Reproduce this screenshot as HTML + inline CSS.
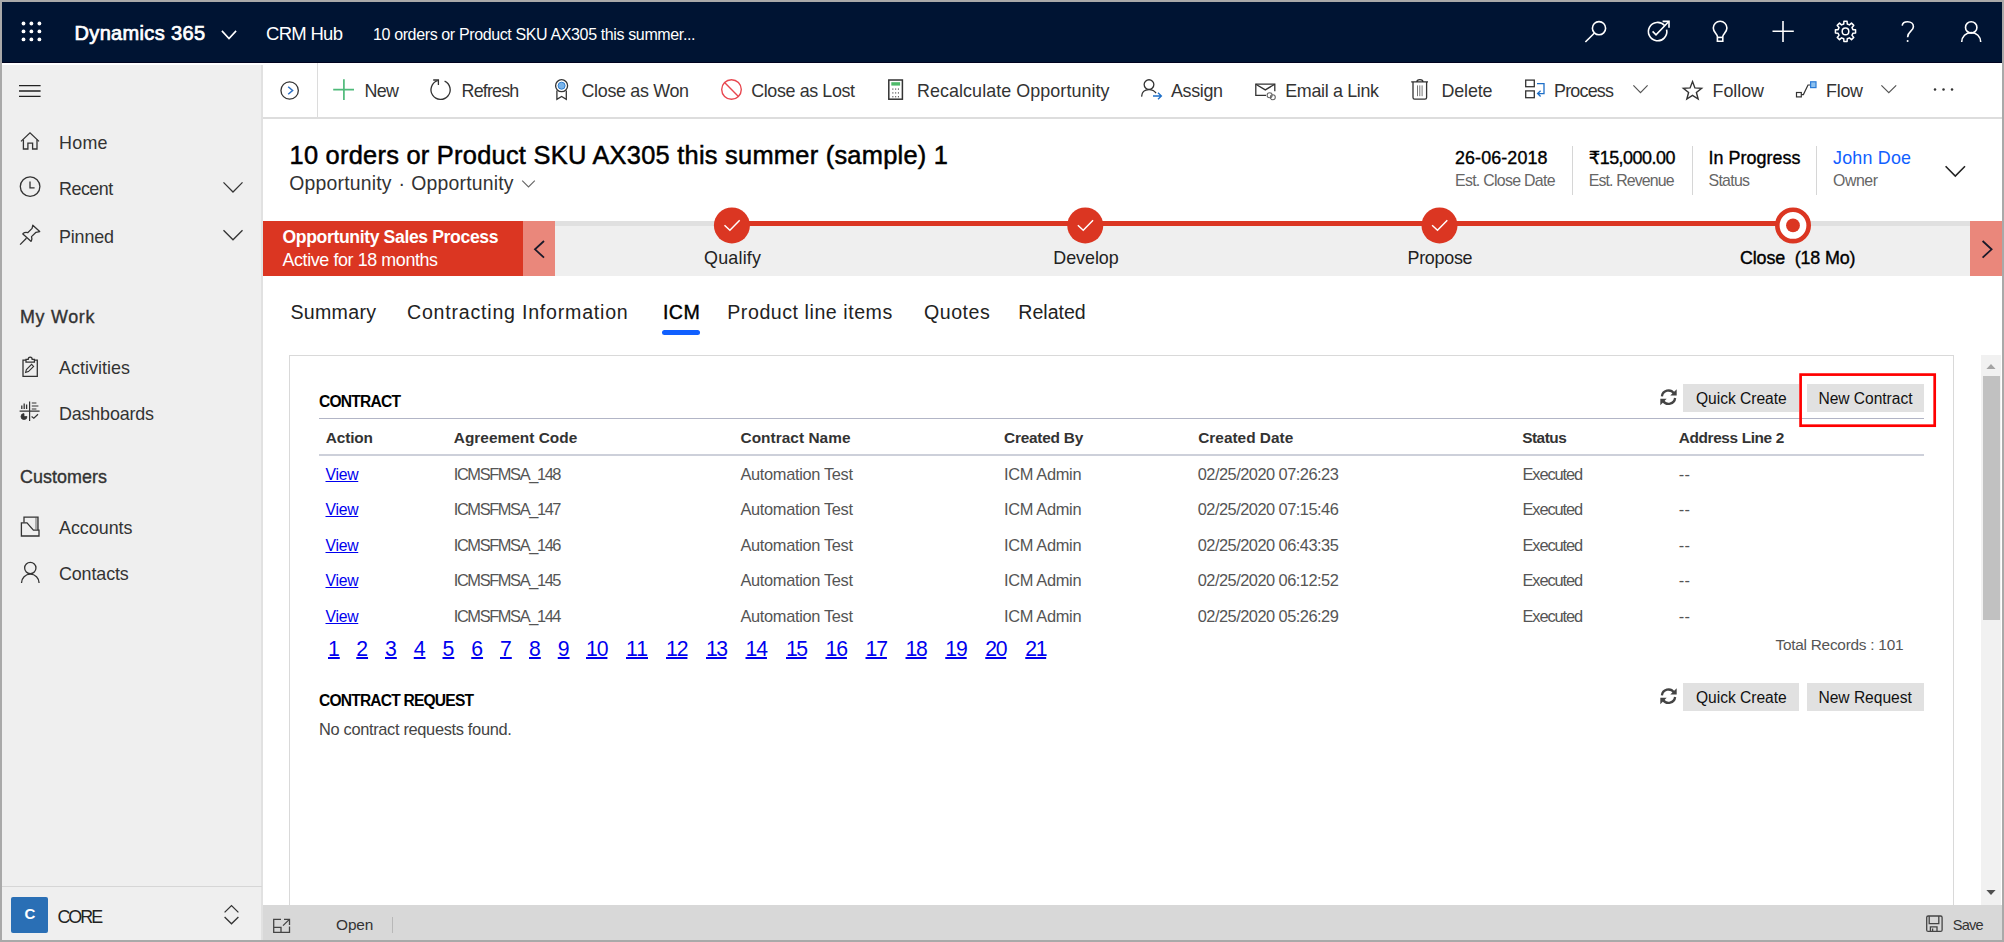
<!DOCTYPE html>
<html lang="en">
<head>
<meta charset="utf-8">
<title>Opportunity: 10 orders or Product SKU AX305 this summer (sample) 1 - Dynamics 365</title>
<style>
html,body{margin:0;padding:0;}
body{width:2004px;height:942px;overflow:hidden;background:#a9a9a9;font-family:"Liberation Sans","DejaVu Sans",sans-serif;position:relative;}
#app{position:absolute;left:2px;top:2px;width:2000px;height:938px;background:#fff;overflow:hidden;}
.box{position:absolute;overflow:visible;}
.g{position:absolute;left:0;top:0;width:0;height:0;}
.t{position:absolute;white-space:pre;line-height:1;margin:0;padding:0;text-decoration:none;}
a.t{text-decoration:underline;text-decoration-thickness:1.3px;text-underline-offset:2px;}
svg{position:absolute;overflow:visible;}
.r{position:absolute;}
nav.topbar{left:0;top:0;width:2000px;height:60px;background:#001433;border-bottom:1px solid #00031f;}
aside.sidebar{left:0;top:63px;width:259px;height:875px;background:#efefef;border-right:2px solid #e1e1e1;}
.cmdbar{left:261px;top:61px;width:1739px;height:54px;background:#fff;border-bottom:2px solid #dddddd;}
header.rec{left:261px;top:117px;width:1739px;height:102px;background:#fff;}
.bpf{left:261px;top:219px;width:1739px;height:54.5px;background:#efefef;}
.tabs{left:261px;top:273.5px;width:1739px;height:80px;background:#fff;}
main.content{left:287px;top:353px;width:1663px;height:600px;background:#fff;border:1px solid #d9d9d9;}
.scroll{left:1979px;top:353px;width:20px;height:550px;background:#f1f1f1;}
footer.status{left:261px;top:903px;width:1739px;height:35px;background:#d8d8d8;}
.btn{position:absolute;background:#e1e1e1;height:27.5px;}
ul{list-style:none;margin:0;padding:0;}
li{margin:0;padding:0;}
table{border-collapse:collapse;position:absolute;left:0;top:0;width:0;height:0;}
th,td{padding:0;font-weight:normal;}
</style>
</head>
<body>
<div id="app">

<nav class="box topbar"><div class="g" style="left:-2px;top:-2px">
<svg style="left:0;top:0" width="2004" height="942" viewBox="0 0 2004 942" fill="none" stroke="#fff" stroke-width="1.6" ><g fill="#fff" stroke="none"><circle cx="23.5" cy="23.5" r="1.9"/><circle cx="31.4" cy="23.5" r="1.9"/><circle cx="39.4" cy="23.5" r="1.9"/><circle cx="23.5" cy="31.4" r="1.9"/><circle cx="31.4" cy="31.4" r="1.9"/><circle cx="39.4" cy="31.4" r="1.9"/><circle cx="23.5" cy="39.4" r="1.9"/><circle cx="31.4" cy="39.4" r="1.9"/><circle cx="39.4" cy="39.4" r="1.9"/></g><path d="M221.9 30.9 L229 38.5 L236.1 30.9"/><circle cx="1599" cy="28.2" r="6.6"/><path d="M1594.2 33.2 L1585.4 42"/><path d="M1664.6 25.6 A9.2 9.2 0 1 0 1666.6 29.6"/><path d="M1652.6 31.4 L1656 34.8 L1668.6 21.8"/><path d="M1662.6 21.4 H1669 V27.8"/><path d="M1717.4 41.2 V36.6 C1717.4 34 1713.3 32.6 1713.3 28 A6.8 6.8 0 0 1 1726.9 28 C1726.9 32.6 1722.8 34 1722.8 36.6 V41.2 Z"/><path d="M1717.4 37.4 H1722.8"/><path d="M1783 21 V42 M1772.5 31.3 H1793.8"/><path d="M1855.57 29.80 L1855.57 33.00 L1852.89 33.17 L1851.98 35.37 L1853.75 37.40 L1851.50 39.65 L1849.47 37.88 L1847.27 38.79 L1847.10 41.47 L1843.90 41.47 L1843.73 38.79 L1841.53 37.88 L1839.50 39.65 L1837.25 37.40 L1839.02 35.37 L1838.11 33.17 L1835.43 33.00 L1835.43 29.80 L1838.11 29.63 L1839.02 27.43 L1837.25 25.40 L1839.50 23.15 L1841.53 24.92 L1843.73 24.01 L1843.90 21.33 L1847.10 21.33 L1847.27 24.01 L1849.47 24.92 L1851.50 23.15 L1853.75 25.40 L1851.98 27.43 L1852.89 29.63 Z" stroke-linejoin="round" stroke-width="1.5"/><circle cx="1845.5" cy="31.4" r="3.3" stroke-width="1.5"/><path d="M1902.2 25.6 C1902.6 22.6 1905 21.8 1907.6 21.8 C1911 21.8 1913.4 23.8 1913.4 26.8 C1913.4 31.2 1907.6 31.4 1907.6 37.2"/><circle cx="1907.6" cy="41" r="1" fill="#fff" stroke="none"/><circle cx="1971.2" cy="27.4" r="5.7"/><path d="M1961.7 42 A9.5 9.5 0 0 1 1980.7 42"/></svg>
<span class="t" style="left:74.50px;top:23.00px;font-size:20px;color:#fff;letter-spacing:0.344px;-webkit-text-stroke:0.72px #fff;">Dynamics 365</span>
<span class="t" style="left:266.00px;top:25.00px;font-size:18.5px;color:#fff;letter-spacing:-0.703px;">CRM Hub</span>
<span class="t" style="left:373.00px;top:27.00px;font-size:16px;color:#fff;letter-spacing:-0.371px;">10 orders or Product SKU AX305 this summer...</span>
</div></nav>

<aside class="box sidebar"><div class="g" style="left:-2px;top:-65px">
<div class="r" style="left:2px;top:886px;width:260px;height:1px;background:#d6d6d6"></div><div class="r" style="left:11.3px;top:897px;width:36.5px;height:36px;background:#2a6fb5;border-radius:2px"></div><svg style="left:0;top:0" width="2004" height="942" viewBox="0 0 2004 942" fill="none" stroke="#333" stroke-width="1.3" ><path d="M19 85.6 H40.6 M19 91 H40.6 M19 96.4 H40.6" stroke="#222"/><path d="M21 141.4 L30 132.8 L39 141.4"/><path d="M23.4 139.6 V149 H27.9 V143.2 H32.6 V149 H37 V139.6"/><circle cx="30.1" cy="186.6" r="9.8"/><path d="M30 181.4 V187.8 H34.6"/><path d="M20.1 244.6 L26.4 238.2 M22.6 233.7 L31.2 241.6"/><path d="M22.6 233.7 Q25.4 231.7 27.7 232.7 L32.1 228.4 L32.8 225.2 L39.7 231.6 L36 232.3 L31.5 236.6 Q32.4 239 31.2 241.6" stroke-linejoin="round"/><path d="M223.5 182.4 L233 192 L242.5 182.4"/><path d="M223.5 230.2 L233 239.8 L242.5 230.2"/><path d="M26 360.2 H23 V376.4 H37.3 V360.2 H34.4"/><path d="M26 362.2 V359.4 H28.2 C28.2 356.4 32.2 356.4 32.2 359.4 H34.4 V362.2 Z"/><path d="M25.6 372.4 L26.4 369.6 L31.6 364.4 L33.6 366.4 L28.4 371.6 Z" stroke-width="1.1"/><path d="M29.6 401.4 V421 M19.6 411.1 H39.6" stroke-width="1.2"/><path d="M21.8 409 V405.4 M24.2 409 V403.4 M26.6 409 V404.4" stroke-width="1.3"/><path d="M31.8 403 H36.4 M31.8 406 H38.4 M31.8 409 H36.4" stroke-width="1.2"/><path d="M24 413.6 A3 3 0 1 0 27 416.6 H24 Z" fill="#333" stroke-width="0.8"/><path d="M31.6 416.6 L33.8 418.2 L38 414.2" stroke-width="1.2"/><path d="M35 517.6 H37.6 V529.4 H35 Z" fill="#aaa" stroke="none"/><path d="M24 522.6 V517.2 H38 V530"/><path d="M21.4 522.8 H27 L33.4 530.2 H39 V536 H21.4 Z"/><circle cx="30.3" cy="568" r="5.65"/><path d="M21.5 583 A8.8 8.8 0 0 1 39.1 583"/><path d="M224.6 912.4 L231.5 905.6 L238.4 912.4 M224.6 917 L231.5 923.8 L238.4 917"/></svg>
<ul>
<li><span class="t" style="left:59.00px;top:135.00px;font-size:17.9px;color:#333;letter-spacing:0.255px;">Home</span></li>
<li><span class="t" style="left:59.00px;top:181.00px;font-size:17.9px;color:#333;letter-spacing:-0.497px;">Recent</span></li>
<li><span class="t" style="left:59.00px;top:229.00px;font-size:17.9px;color:#333;letter-spacing:-0.144px;">Pinned</span></li>
<li><span class="t" style="left:20.00px;top:309.00px;font-size:17.9px;color:#333;letter-spacing:0.708px;-webkit-text-stroke:0.36px #333;">My Work</span></li>
<li><span class="t" style="left:59.00px;top:360.00px;font-size:17.9px;color:#333;letter-spacing:0.045px;">Activities</span></li>
<li><span class="t" style="left:59.00px;top:406.00px;font-size:17.9px;color:#333;letter-spacing:-0.163px;">Dashboards</span></li>
<li><span class="t" style="left:20.00px;top:469.00px;font-size:17.9px;color:#333;letter-spacing:0.062px;-webkit-text-stroke:0.36px #333;">Customers</span></li>
<li><span class="t" style="left:59.00px;top:520.00px;font-size:17.9px;color:#333;letter-spacing:-0.013px;">Accounts</span></li>
<li><span class="t" style="left:59.00px;top:566.00px;font-size:17.9px;color:#333;letter-spacing:-0.123px;">Contacts</span></li>
<li><span class="t" style="left:57.40px;top:909.00px;font-size:17.9px;color:#222;letter-spacing:-2.000px;">CORE</span></li>
<li><span class="t" style="left:24.50px;top:906.00px;font-size:15px;color:#fff;font-weight:700;">C</span></li>
</ul>
</div></aside>

<div class="box cmdbar"><div class="g" style="left:-263px;top:-63px">
<div class="r" style="left:317px;top:63px;width:1px;height:54px;background:#dcdcdc"></div>
<svg style="left:0;top:0" width="2004" height="942" viewBox="0 0 2004 942" fill="none" stroke="#333" stroke-width="1.3" ><circle cx="289.65" cy="90.5" r="8.7"/><path d="M288.2 86.7 L292.6 90.5 L288.2 94.3" stroke="#2b6fc4" stroke-width="1.5"/><path d="M343.9 79.2 V100.1 M333.2 89.6 H354" stroke="#4fba7a" stroke-width="1.7"/><path d="M444.6 81.1 A9.6 9.6 0 1 1 437.6 80.7"/><path d="M433.2 80 H438.4 V85"/><circle cx="561.6" cy="85.7" r="6"/><circle cx="561.6" cy="85.7" r="3.5" fill="#7ab4ea" stroke="#2f7fd0" stroke-width="1"/><path d="M556.9 90.6 V99.4 L561.6 96.4 L566.3 99.4 V90.6"/><circle cx="731.5" cy="89.5" r="9.8" stroke="#e8474f" stroke-width="1.4"/><path d="M724.6 82.6 L738.4 96.4" stroke="#e8474f" stroke-width="1.4"/><rect x="888.8" y="80" width="13.6" height="19.2" stroke-width="1.5"/><rect x="891.3" y="82.2" width="8.8" height="3.4" fill="#4fba6a" stroke="none"/><g fill="#666" stroke="none"><rect x="892.3" y="88.4" width="1.1" height="1.4"/><rect x="895.1" y="88.4" width="1.1" height="1.4"/><rect x="897.9" y="88.4" width="1.1" height="1.4"/><rect x="892.3" y="92.2" width="1.1" height="1.4"/><rect x="895.1" y="92.2" width="1.1" height="1.4"/><rect x="897.9" y="92.2" width="1.1" height="1.4"/><rect x="892.3" y="96" width="1.1" height="1.4"/><rect x="895.1" y="96" width="1.1" height="1.4"/><rect x="897.9" y="96" width="1.1" height="1.4"/></g><circle cx="1149" cy="84.6" r="4.85"/><path d="M1141.6 96.6 C1141.8 92 1145 89.6 1149 89.6 C1152.2 89.6 1154.6 91 1156 93.2"/><path d="M1153 96 H1161.2 M1158 92.8 L1161.4 96 L1158 99.2" stroke="#1e6fc8"/><path d="M1266 95.4 H1255.8 V84.2 H1274.8 V91.2"/><path d="M1255.8 84.2 L1265.3 89.9 L1274.8 84.2"/><circle cx="1269.6" cy="95.2" r="2.5" stroke="#666" stroke-width="1.1"/><circle cx="1272.8" cy="97.2" r="2.5" stroke="#666" stroke-width="1.1"/><path d="M1411.2 81.8 H1428 M1416.8 81.8 C1416.8 78.8 1423 78.8 1423 81.8"/><path d="M1413 82 V97.6 Q1413 99.2 1414.6 99.2 H1425 Q1426.6 99.2 1426.6 97.6 V82"/><path d="M1417.5 85.4 V96.2 M1419.8 85.4 V96.2 M1422.1 85.4 V96.2" stroke="#777" stroke-width="1"/><rect x="1525.7" y="80.1" width="8.6" height="6.6"/><rect x="1525.7" y="90.9" width="8.6" height="6.8"/><path d="M1537 83.6 H1544 V93.6 H1538 M1540.6 90.8 L1537.6 93.6 L1540.6 96.4" stroke="#1e6fc8"/><path d="M1633.4 85.4 L1640.5 92.6 L1647.6 85.4" stroke="#555" stroke-width="1.2"/><path d="M1692.50 81.60 L1694.91 87.88 L1701.63 88.23 L1696.40 92.47 L1698.14 98.97 L1692.50 95.30 L1686.86 98.97 L1688.60 92.47 L1683.37 88.23 L1690.09 87.88 Z" stroke-width="1.4" stroke-linejoin="miter"/><rect x="1796.5" y="92.5" width="4.8" height="4.4" stroke-width="1.2"/><path d="M1801.4 94.6 H1803.4 L1808 85 H1810" stroke-width="1.2"/><rect x="1810.6" y="81.8" width="5.4" height="5.8" fill="#8cc0ee" stroke="#2b7bd6" stroke-width="1.2"/><path d="M1881.4 85.4 L1888.8 92.6 L1896.2 85.4" stroke="#555" stroke-width="1.2"/><g fill="#333" stroke="none"><circle cx="1935" cy="89.6" r="1.25"/><circle cx="1943.5" cy="89.6" r="1.25"/><circle cx="1952" cy="89.6" r="1.25"/></g></svg>
<ul>
<li><span class="t" style="left:364.50px;top:83.00px;font-size:17.9px;color:#333;letter-spacing:-0.648px;">New</span></li>
<li><span class="t" style="left:461.60px;top:83.00px;font-size:17.9px;color:#333;letter-spacing:-0.843px;">Refresh</span></li>
<li><span class="t" style="left:581.50px;top:83.00px;font-size:17.9px;color:#333;letter-spacing:-0.322px;">Close as Won</span></li>
<li><span class="t" style="left:751.25px;top:83.00px;font-size:17.9px;color:#333;letter-spacing:-0.388px;">Close as Lost</span></li>
<li><span class="t" style="left:917.00px;top:83.00px;font-size:17.9px;color:#333;letter-spacing:0.071px;">Recalculate Opportunity</span></li>
<li><span class="t" style="left:1171.00px;top:83.00px;font-size:17.9px;color:#333;letter-spacing:-0.341px;">Assign</span></li>
<li><span class="t" style="left:1285.25px;top:83.00px;font-size:17.9px;color:#333;letter-spacing:-0.337px;">Email a Link</span></li>
<li><span class="t" style="left:1441.50px;top:83.00px;font-size:17.9px;color:#333;letter-spacing:-0.144px;">Delete</span></li>
<li><span class="t" style="left:1554.00px;top:83.00px;font-size:17.9px;color:#333;letter-spacing:-0.773px;">Process</span></li>
<li><span class="t" style="left:1712.50px;top:83.00px;font-size:17.9px;color:#333;letter-spacing:-0.041px;">Follow</span></li>
<li><span class="t" style="left:1826.00px;top:83.00px;font-size:17.9px;color:#333;letter-spacing:-0.260px;">Flow</span></li>
</ul>
</div></div>

<header class="box rec"><div class="g" style="left:-263px;top:-119px">
<div class="r" style="left:1571.5px;top:146px;width:1px;height:48.5px;background:#d6d6d6"></div>
<div class="r" style="left:1691.5px;top:146px;width:1px;height:48.5px;background:#d6d6d6"></div>
<div class="r" style="left:1816px;top:146px;width:1px;height:48.5px;background:#d6d6d6"></div>
<svg style="left:0;top:0" width="2004" height="942" viewBox="0 0 2004 942" fill="none" stroke="#333" stroke-width="1.3" ><path d="M522.2 180.6 L528.5 186.9 L534.8 180.6" stroke="#666" stroke-width="1.1"/><path d="M1945.6 166.2 L1955.3 176 L1965 166.2" stroke="#222" stroke-width="1.6"/></svg>
<span class="t" style="left:289.50px;top:143.00px;font-size:25.4px;color:#000;letter-spacing:0.261px;-webkit-text-stroke:0.51px #000;">10 orders or Product SKU AX305 this summer (sample) 1</span>
<span class="t" style="left:289.25px;top:174.00px;font-size:19.4px;color:#333;letter-spacing:0.200px;">Opportunity</span>
<span class="t" style="left:398.50px;top:174.00px;font-size:19.4px;color:#333;">·</span>
<span class="t" style="left:411.25px;top:174.00px;font-size:19.4px;color:#333;letter-spacing:0.200px;">Opportunity</span>
<span class="t" style="left:1455.00px;top:150.00px;font-size:17.9px;color:#000;letter-spacing:0.109px;-webkit-text-stroke:0.36px #000;">26-06-2018</span>
<span class="t" style="left:1455.00px;top:173.00px;font-size:15.9px;color:#666;letter-spacing:-0.708px;">Est. Close Date</span>
<span class="t" style="left:1588.75px;top:150.00px;font-size:17.9px;color:#000;letter-spacing:-0.470px;-webkit-text-stroke:0.36px #000;">₹15,000.00</span>
<span class="t" style="left:1588.75px;top:173.00px;font-size:15.9px;color:#666;letter-spacing:-0.878px;">Est. Revenue</span>
<span class="t" style="left:1708.50px;top:150.00px;font-size:17.9px;color:#000;letter-spacing:0.052px;-webkit-text-stroke:0.36px #000;">In Progress</span>
<span class="t" style="left:1708.50px;top:173.00px;font-size:15.9px;color:#666;letter-spacing:-0.713px;">Status</span>
<span class="t" style="left:1833.00px;top:150.00px;font-size:17.9px;color:#1160ff;letter-spacing:0.201px;">John Doe</span>
<span class="t" style="left:1833.00px;top:173.00px;font-size:15.9px;color:#666;letter-spacing:-0.453px;">Owner</span>
</div></header>

<div class="box bpf"><div class="g" style="left:-263px;top:-221px">
<div class="r" style="left:555px;top:221px;width:1415px;height:5px;background:#e0e0e0"></div>
<div class="r" style="left:732px;top:221px;width:1061px;height:5px;background:#db3622"></div>
<div class="r" style="left:263px;top:221px;width:260px;height:54.5px;background:#db3622"></div>
<div class="r" style="left:523px;top:221px;width:32.25px;height:54.5px;background:#ea877b"></div>
<div class="r" style="left:1969.5px;top:221px;width:32.5px;height:54.5px;background:#ea877b"></div>
<svg style="left:0;top:0" width="2004" height="942" viewBox="0 0 2004 942" fill="none" stroke="#333" stroke-width="1.3" ><circle cx="731.9" cy="225.4" r="18" fill="#db3622" stroke="none"/><path d="M724.5 225.3 L729.9 230.2 L739.7 220.3" stroke="#fff" stroke-width="1.5"/><circle cx="1085.25" cy="225.4" r="18" fill="#db3622" stroke="none"/><path d="M1077.85 225.3 L1083.25 230.2 L1093.05 220.3" stroke="#fff" stroke-width="1.5"/><circle cx="1439.5" cy="225.4" r="18" fill="#db3622" stroke="none"/><path d="M1432.1 225.3 L1437.5 230.2 L1447.3 220.3" stroke="#fff" stroke-width="1.5"/><circle cx="1793" cy="225.4" r="15.7" fill="#fff" stroke="#db3622" stroke-width="4.6"/><circle cx="1793" cy="225.4" r="6.9" fill="#db3622" stroke="none"/><path d="M544 241 L535 249.3 L544 257.6" stroke="#1a1a2a" stroke-width="1.8"/><path d="M1982.6 241 L1991.6 249.3 L1982.6 257.6" stroke="#1a1a2a" stroke-width="1.8"/></svg>
<span class="t" style="left:282.50px;top:229.00px;font-size:17.6px;color:#fff;letter-spacing:-0.370px;font-weight:700;">Opportunity Sales Process</span>
<span class="t" style="left:282.50px;top:252.00px;font-size:17.9px;color:#fff;letter-spacing:-0.399px;">Active for 18 months</span>
<span class="t" style="left:704.00px;top:250.00px;font-size:17.9px;color:#222;letter-spacing:0.219px;">Qualify</span>
<span class="t" style="left:1053.25px;top:250.00px;font-size:17.9px;color:#222;letter-spacing:-0.023px;">Develop</span>
<span class="t" style="left:1407.50px;top:250.00px;font-size:17.9px;color:#222;letter-spacing:-0.273px;">Propose</span>
<span class="t" style="left:1740.00px;top:250.00px;font-size:17.9px;color:#000;letter-spacing:-0.141px;-webkit-text-stroke:0.36px #000;">Close  (18 Mo)</span>
</div></div>

<div class="box tabs"><div class="g" style="left:-263px;top:-275.5px">
<div class="r" style="left:661.75px;top:330px;width:38.5px;height:5px;border-radius:2.5px;background:#1160ff"></div>
<ul>
<li><span class="t" style="left:290.50px;top:303.00px;font-size:19.6px;color:#222;letter-spacing:0.276px;">Summary</span></li>
<li><span class="t" style="left:407.00px;top:303.00px;font-size:19.6px;color:#222;letter-spacing:0.776px;">Contracting Information</span></li>
<li><span class="t" style="left:663.00px;top:303.00px;font-size:19.6px;color:#000;letter-spacing:0.414px;-webkit-text-stroke:0.39px #000;">ICM</span></li>
<li><span class="t" style="left:727.25px;top:303.00px;font-size:19.6px;color:#222;letter-spacing:0.545px;">Product line items</span></li>
<li><span class="t" style="left:924.00px;top:303.00px;font-size:19.6px;color:#222;letter-spacing:0.512px;">Quotes</span></li>
<li><span class="t" style="left:1018.25px;top:303.00px;font-size:19.6px;color:#222;letter-spacing:-0.008px;">Related</span></li>
</ul>
</div></div>

<main class="box content"><div class="g" style="left:-290px;top:-356px">
<div class="r" style="left:319px;top:418px;width:1604.75px;height:1.3px;background:#b2b5c6"></div>
<div class="r" style="left:319px;top:454px;width:1604.75px;height:2px;background:#cdd0da"></div>
<svg style="left:0;top:0" width="2004" height="942" viewBox="0 0 2004 942" fill="none" stroke="#333" stroke-width="1.3" ><g transform="translate(1668.5 397.2)" stroke="#444" stroke-width="2.3" fill="none"><path d="M-6.60 -0.80 A6.6 6.6 0 0 1 5.41 -3.79"/><path d="M6.60 0.80 A6.6 6.6 0 0 1 -5.41 3.79"/><path d="M8.2 -8 V-1.6 H1.8 Z" fill="#444" stroke="none"/><path d="M-8.2 8 V1.6 H-1.8 Z" fill="#444" stroke="none"/></g><g transform="translate(1668.5 696.2)" stroke="#444" stroke-width="2.3" fill="none"><path d="M-6.60 -0.80 A6.6 6.6 0 0 1 5.41 -3.79"/><path d="M6.60 0.80 A6.6 6.6 0 0 1 -5.41 3.79"/><path d="M8.2 -8 V-1.6 H1.8 Z" fill="#444" stroke="none"/><path d="M-8.2 8 V1.6 H-1.8 Z" fill="#444" stroke="none"/></g></svg>
<div class="btn" style="left:1683px;top:384.25px;width:116.25px"></div>
<div class="btn" style="left:1807.25px;top:384.25px;width:116.5px"></div>
<div class="btn" style="left:1683px;top:683px;width:116.25px"></div>
<div class="btn" style="left:1807.25px;top:683px;width:116.5px"></div>
<span class="t" style="left:1696.00px;top:391.00px;font-size:15.6px;color:#111;letter-spacing:-0.023px;">Quick Create</span>
<span class="t" style="left:1818.50px;top:391.00px;font-size:15.6px;color:#111;letter-spacing:-0.043px;">New Contract</span>
<span class="t" style="left:1696.00px;top:690.00px;font-size:15.6px;color:#111;letter-spacing:-0.023px;">Quick Create</span>
<span class="t" style="left:1818.50px;top:690.00px;font-size:15.6px;color:#111;letter-spacing:-0.036px;">New Request</span>
<span class="t" style="left:319.00px;top:394.00px;font-size:15.6px;color:#000;letter-spacing:-0.786px;font-weight:700;">CONTRACT</span>
<span class="t" style="left:1775.50px;top:637.00px;font-size:15.4px;color:#555;letter-spacing:-0.256px;">Total Records : 101</span>
<span class="t" style="left:319.00px;top:693.00px;font-size:15.6px;color:#000;letter-spacing:-0.814px;font-weight:700;">CONTRACT REQUEST</span>
<span class="t" style="left:319.00px;top:721.00px;font-size:16.4px;color:#444;letter-spacing:-0.329px;">No contract requests found.</span>
<table>
<thead><tr>
<th><span class="t" style="left:325.75px;top:430.00px;font-size:15.4px;color:#333;letter-spacing:-0.128px;font-weight:700;">Action</span></th>
<th><span class="t" style="left:453.75px;top:430.00px;font-size:15.4px;color:#333;letter-spacing:0.026px;font-weight:700;">Agreement Code</span></th>
<th><span class="t" style="left:740.50px;top:430.00px;font-size:15.4px;color:#333;letter-spacing:0.043px;font-weight:700;">Contract Name</span></th>
<th><span class="t" style="left:1004.00px;top:430.00px;font-size:15.4px;color:#333;letter-spacing:-0.224px;font-weight:700;">Created By</span></th>
<th><span class="t" style="left:1198.25px;top:430.00px;font-size:15.4px;color:#333;font-weight:700;">Created Date</span></th>
<th><span class="t" style="left:1522.25px;top:430.00px;font-size:15.4px;color:#333;letter-spacing:-0.509px;font-weight:700;">Status</span></th>
<th><span class="t" style="left:1678.75px;top:430.00px;font-size:15.4px;color:#333;letter-spacing:-0.373px;font-weight:700;">Address Line 2</span></th>
</tr></thead>
<tbody>
<tr>
<td><a class="t" style="left:325.50px;top:467.00px;font-size:15.7px;color:#0000ee;letter-spacing:-0.240px;text-decoration:underline;text-underline-offset:0.5px;">View</a></td>
<td><span class="t" style="left:453.75px;top:466.00px;font-size:16.4px;color:#555;letter-spacing:-1.385px;">ICMSFMSA_148</span></td>
<td><span class="t" style="left:740.50px;top:466.00px;font-size:16.4px;color:#555;letter-spacing:-0.338px;">Automation Test</span></td>
<td><span class="t" style="left:1004.00px;top:466.00px;font-size:16.4px;color:#555;letter-spacing:-0.332px;">ICM Admin</span></td>
<td><span class="t" style="left:1197.75px;top:466.00px;font-size:16.4px;color:#555;letter-spacing:-0.522px;">02/25/2020 07:26:23</span></td>
<td><span class="t" style="left:1522.50px;top:466.00px;font-size:16.4px;color:#555;letter-spacing:-1.121px;">Executed</span></td>
<td><span class="t" style="left:1678.75px;top:466.00px;font-size:16.4px;color:#555;letter-spacing:0.328px;">--</span></td>
</tr>
<tr>
<td><a class="t" style="left:325.50px;top:502.00px;font-size:15.7px;color:#0000ee;letter-spacing:-0.240px;text-decoration:underline;text-underline-offset:0.5px;">View</a></td>
<td><span class="t" style="left:453.75px;top:501.00px;font-size:16.4px;color:#555;letter-spacing:-1.385px;">ICMSFMSA_147</span></td>
<td><span class="t" style="left:740.50px;top:501.00px;font-size:16.4px;color:#555;letter-spacing:-0.338px;">Automation Test</span></td>
<td><span class="t" style="left:1004.00px;top:501.00px;font-size:16.4px;color:#555;letter-spacing:-0.332px;">ICM Admin</span></td>
<td><span class="t" style="left:1197.75px;top:501.00px;font-size:16.4px;color:#555;letter-spacing:-0.522px;">02/25/2020 07:15:46</span></td>
<td><span class="t" style="left:1522.50px;top:501.00px;font-size:16.4px;color:#555;letter-spacing:-1.121px;">Executed</span></td>
<td><span class="t" style="left:1678.75px;top:501.00px;font-size:16.4px;color:#555;letter-spacing:0.328px;">--</span></td>
</tr>
<tr>
<td><a class="t" style="left:325.50px;top:538.00px;font-size:15.7px;color:#0000ee;letter-spacing:-0.240px;text-decoration:underline;text-underline-offset:0.5px;">View</a></td>
<td><span class="t" style="left:453.75px;top:537.00px;font-size:16.4px;color:#555;letter-spacing:-1.385px;">ICMSFMSA_146</span></td>
<td><span class="t" style="left:740.50px;top:537.00px;font-size:16.4px;color:#555;letter-spacing:-0.338px;">Automation Test</span></td>
<td><span class="t" style="left:1004.00px;top:537.00px;font-size:16.4px;color:#555;letter-spacing:-0.332px;">ICM Admin</span></td>
<td><span class="t" style="left:1197.75px;top:537.00px;font-size:16.4px;color:#555;letter-spacing:-0.522px;">02/25/2020 06:43:35</span></td>
<td><span class="t" style="left:1522.50px;top:537.00px;font-size:16.4px;color:#555;letter-spacing:-1.121px;">Executed</span></td>
<td><span class="t" style="left:1678.75px;top:537.00px;font-size:16.4px;color:#555;letter-spacing:0.328px;">--</span></td>
</tr>
<tr>
<td><a class="t" style="left:325.50px;top:573.00px;font-size:15.7px;color:#0000ee;letter-spacing:-0.240px;text-decoration:underline;text-underline-offset:0.5px;">View</a></td>
<td><span class="t" style="left:453.75px;top:572.00px;font-size:16.4px;color:#555;letter-spacing:-1.385px;">ICMSFMSA_145</span></td>
<td><span class="t" style="left:740.50px;top:572.00px;font-size:16.4px;color:#555;letter-spacing:-0.338px;">Automation Test</span></td>
<td><span class="t" style="left:1004.00px;top:572.00px;font-size:16.4px;color:#555;letter-spacing:-0.332px;">ICM Admin</span></td>
<td><span class="t" style="left:1197.75px;top:572.00px;font-size:16.4px;color:#555;letter-spacing:-0.522px;">02/25/2020 06:12:52</span></td>
<td><span class="t" style="left:1522.50px;top:572.00px;font-size:16.4px;color:#555;letter-spacing:-1.121px;">Executed</span></td>
<td><span class="t" style="left:1678.75px;top:572.00px;font-size:16.4px;color:#555;letter-spacing:0.328px;">--</span></td>
</tr>
<tr>
<td><a class="t" style="left:325.50px;top:609.00px;font-size:15.7px;color:#0000ee;letter-spacing:-0.240px;text-decoration:underline;text-underline-offset:0.5px;">View</a></td>
<td><span class="t" style="left:453.75px;top:608.00px;font-size:16.4px;color:#555;letter-spacing:-1.385px;">ICMSFMSA_144</span></td>
<td><span class="t" style="left:740.50px;top:608.00px;font-size:16.4px;color:#555;letter-spacing:-0.338px;">Automation Test</span></td>
<td><span class="t" style="left:1004.00px;top:608.00px;font-size:16.4px;color:#555;letter-spacing:-0.332px;">ICM Admin</span></td>
<td><span class="t" style="left:1197.75px;top:608.00px;font-size:16.4px;color:#555;letter-spacing:-0.522px;">02/25/2020 05:26:29</span></td>
<td><span class="t" style="left:1522.50px;top:608.00px;font-size:16.4px;color:#555;letter-spacing:-1.121px;">Executed</span></td>
<td><span class="t" style="left:1678.75px;top:608.00px;font-size:16.4px;color:#555;letter-spacing:0.328px;">--</span></td>
</tr>
</tbody></table>
<ul class="pager">
<li><a class="t" style="left:328.00px;top:638.00px;font-size:21.2px;color:#0000ee;text-decoration:underline;text-decoration-thickness:2px;text-underline-offset:1px;">1</a></li>
<li><a class="t" style="left:356.25px;top:638.00px;font-size:21.2px;color:#0000ee;text-decoration:underline;text-decoration-thickness:2px;text-underline-offset:1px;">2</a></li>
<li><a class="t" style="left:385.00px;top:638.00px;font-size:21.2px;color:#0000ee;text-decoration:underline;text-decoration-thickness:2px;text-underline-offset:1px;">3</a></li>
<li><a class="t" style="left:413.75px;top:638.00px;font-size:21.2px;color:#0000ee;text-decoration:underline;text-decoration-thickness:2px;text-underline-offset:1px;">4</a></li>
<li><a class="t" style="left:442.50px;top:638.00px;font-size:21.2px;color:#0000ee;text-decoration:underline;text-decoration-thickness:2px;text-underline-offset:1px;">5</a></li>
<li><a class="t" style="left:471.25px;top:638.00px;font-size:21.2px;color:#0000ee;text-decoration:underline;text-decoration-thickness:2px;text-underline-offset:1px;">6</a></li>
<li><a class="t" style="left:500.00px;top:638.00px;font-size:21.2px;color:#0000ee;text-decoration:underline;text-decoration-thickness:2px;text-underline-offset:1px;">7</a></li>
<li><a class="t" style="left:529.00px;top:638.00px;font-size:21.2px;color:#0000ee;text-decoration:underline;text-decoration-thickness:2px;text-underline-offset:1px;">8</a></li>
<li><a class="t" style="left:557.75px;top:638.00px;font-size:21.2px;color:#0000ee;text-decoration:underline;text-decoration-thickness:2px;text-underline-offset:1px;">9</a></li>
<li><a class="t" style="left:586.00px;top:638.00px;font-size:21.2px;color:#0000ee;letter-spacing:-1.078px;text-decoration:underline;text-decoration-thickness:2px;text-underline-offset:1px;">10</a></li>
<li><a class="t" style="left:626.00px;top:638.00px;font-size:21.2px;color:#0000ee;text-decoration:underline;text-decoration-thickness:2px;text-underline-offset:1px;">11</a></li>
<li><a class="t" style="left:666.00px;top:638.00px;font-size:21.2px;color:#0000ee;letter-spacing:-1.078px;text-decoration:underline;text-decoration-thickness:2px;text-underline-offset:1px;">12</a></li>
<li><a class="t" style="left:706.00px;top:638.00px;font-size:21.2px;color:#0000ee;letter-spacing:-1.578px;text-decoration:underline;text-decoration-thickness:2px;text-underline-offset:1px;">13</a></li>
<li><a class="t" style="left:745.50px;top:638.00px;font-size:21.2px;color:#0000ee;letter-spacing:-1.078px;text-decoration:underline;text-decoration-thickness:2px;text-underline-offset:1px;">14</a></li>
<li><a class="t" style="left:786.00px;top:638.00px;font-size:21.2px;color:#0000ee;letter-spacing:-1.578px;text-decoration:underline;text-decoration-thickness:2px;text-underline-offset:1px;">15</a></li>
<li><a class="t" style="left:825.50px;top:638.00px;font-size:21.2px;color:#0000ee;letter-spacing:-1.078px;text-decoration:underline;text-decoration-thickness:2px;text-underline-offset:1px;">16</a></li>
<li><a class="t" style="left:865.50px;top:638.00px;font-size:21.2px;color:#0000ee;letter-spacing:-1.078px;text-decoration:underline;text-decoration-thickness:2px;text-underline-offset:1px;">17</a></li>
<li><a class="t" style="left:905.50px;top:638.00px;font-size:21.2px;color:#0000ee;letter-spacing:-1.328px;text-decoration:underline;text-decoration-thickness:2px;text-underline-offset:1px;">18</a></li>
<li><a class="t" style="left:945.25px;top:638.00px;font-size:21.2px;color:#0000ee;letter-spacing:-1.078px;text-decoration:underline;text-decoration-thickness:2px;text-underline-offset:1px;">19</a></li>
<li><a class="t" style="left:985.25px;top:638.00px;font-size:21.2px;color:#0000ee;letter-spacing:-1.328px;text-decoration:underline;text-decoration-thickness:2px;text-underline-offset:1px;">20</a></li>
<li><a class="t" style="left:1025.25px;top:638.00px;font-size:21.2px;color:#0000ee;letter-spacing:-1.328px;text-decoration:underline;text-decoration-thickness:2px;text-underline-offset:1px;">21</a></li>
</ul>
<svg style="left:0;top:0" width="2004" height="942" viewBox="0 0 2004 942" fill="none"><rect x="1800.6" y="374.6" width="134.1" height="51.1" stroke="#ff0000" stroke-width="2.7"/></svg>
</div></main>

<div class="box scroll"><div class="g" style="left:-1981px;top:-355px">
<div class="r" style="left:1982.5px;top:376px;width:17px;height:244px;background:#c1c1c1"></div>
<svg style="left:0;top:0" width="2004" height="942" viewBox="0 0 2004 942" fill="none" stroke="#333" stroke-width="1.3" ><path d="M1986.4 369 L1991 364 L1995.6 369 Z" fill="#a3a3a3" stroke="none"/><path d="M1986.4 890 L1991 895 L1995.6 890 Z" fill="#505050" stroke="none"/></svg>
</div></div>

<footer class="box status"><div class="g" style="left:-263px;top:-905px">
<div class="r" style="left:392px;top:916.5px;width:1px;height:16px;background:#b8b8b8"></div>
<svg style="left:0;top:0" width="2004" height="942" viewBox="0 0 2004 942" fill="none" stroke="#444" stroke-width="1.3" ><path d="M281 919.3 H273.7 V932.3 H289.5 V926.6 M273.7 927.3 H281 V932.3"/><path d="M283 925.6 L289.4 919.4 M284 919.3 H289.5 V925"/><rect x="1926.7" y="916" width="15.4" height="15.4" rx="1.5"/><path d="M1929.2 916 V923.6 H1938.8 V916 M1930.4 931.4 V926.8 H1937 V931.4 M1932.6 931 V928.6"/></svg>
<span class="t" style="left:336.00px;top:917.00px;font-size:15.4px;color:#333;letter-spacing:-0.085px;">Open</span>
<span class="t" style="left:1952.70px;top:918.00px;font-size:14.6px;color:#333;letter-spacing:-0.789px;">Save</span>
</div></footer>

</div>
</body>
</html>
